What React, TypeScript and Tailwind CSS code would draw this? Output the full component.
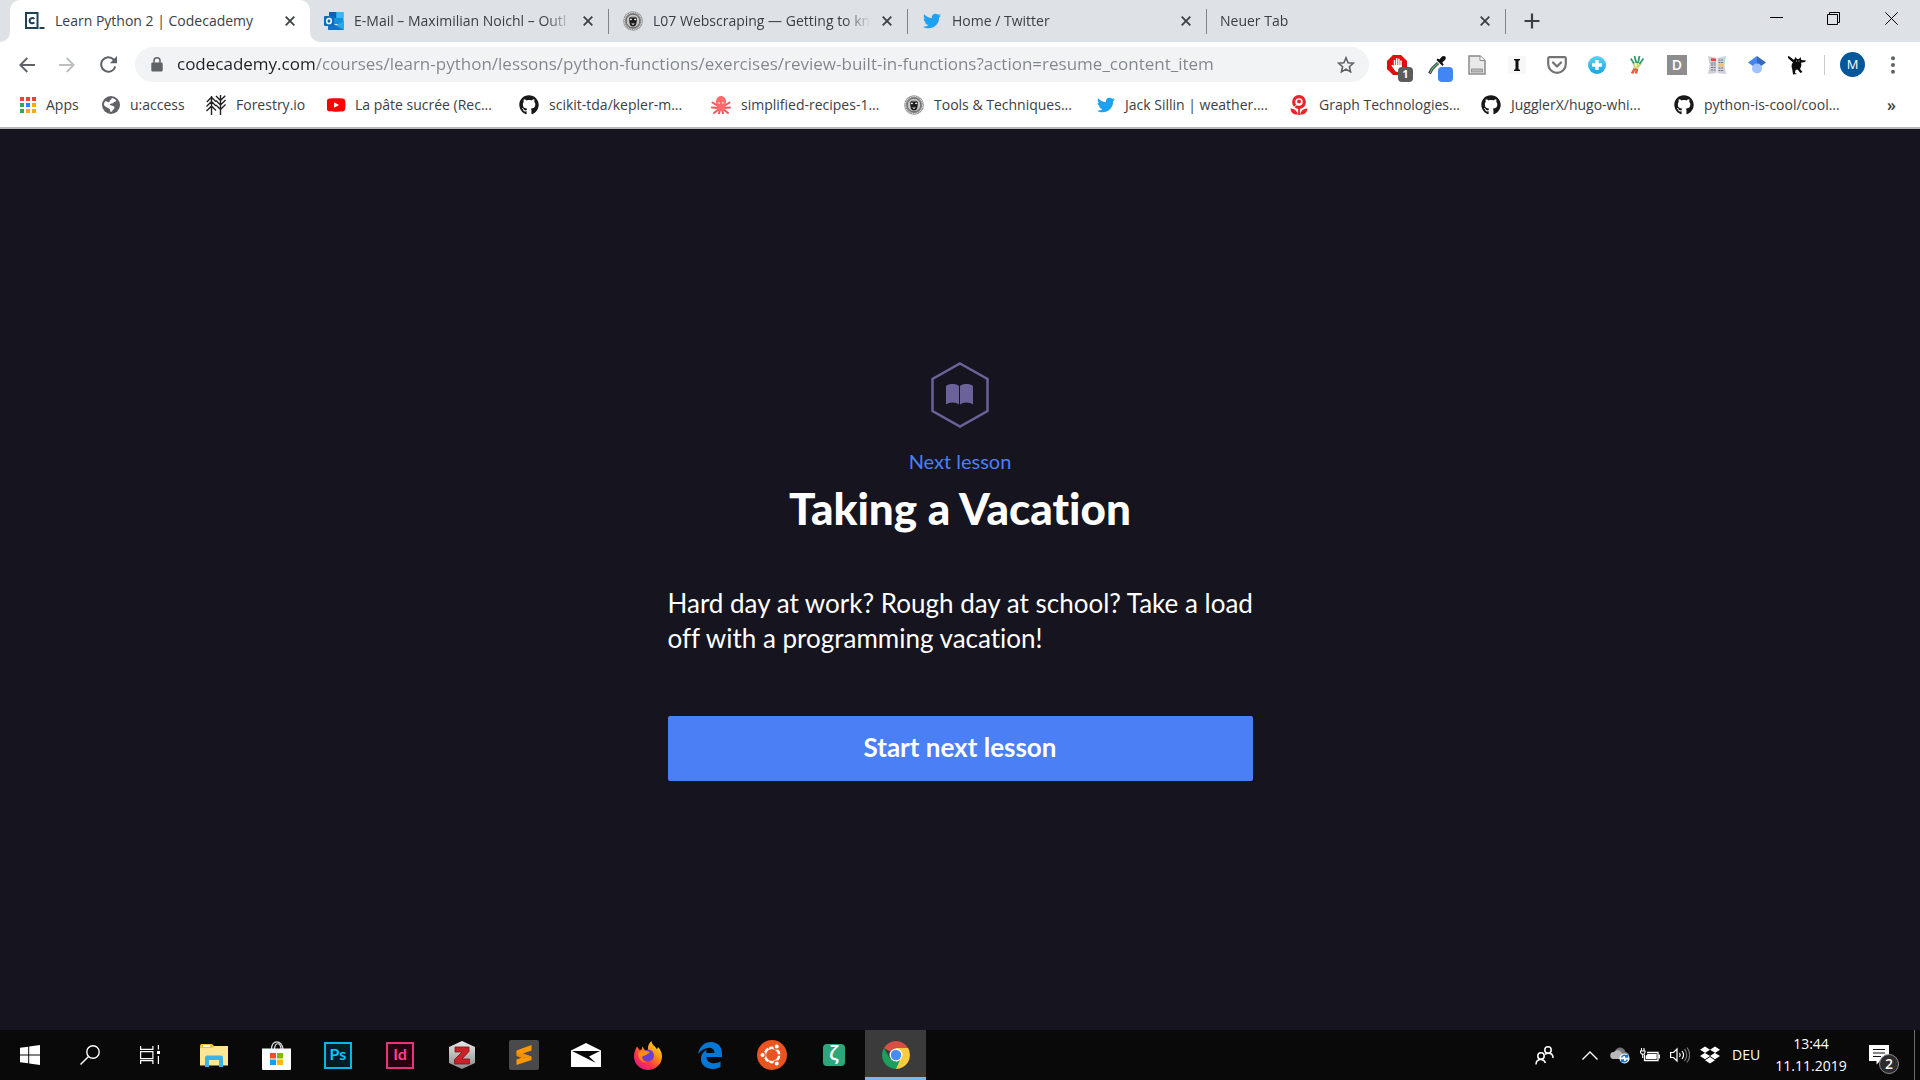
import React from "react";
import { FaGithub, FaTwitter, FaYoutube, FaDropbox } from "react-icons/fa";

type IconProps = { className?: string };

/* ---------- site icons ---------- */

const CodecademyIcon = () => (
  <svg viewBox="0 0 20 18" className="h-[18px] w-5 shrink-0">
    <rect x="1" y="1" width="11.5" height="15" fill="none" stroke="#204056" strokeWidth="2" />
    <path d="M9.200 7C8.300 5.600 4.600 5.600 4.600 8.700s3.700 3.100 4.600 1.700" fill="none" stroke="#204056" strokeWidth="2" />
    <rect x="14.500" y="15" width="5" height="2" fill="#204056" />
  </svg>
);

const OutlookIcon = () => (
  <svg viewBox="0 0 20 18" className="h-[18px] w-5 shrink-0">
    <rect x="5" y="0" width="14.500" height="12" rx="1" fill="#1490df" />
    <rect x="5" y="0" width="7" height="6" fill="#0f5fb0" />
    <rect x="12.500" y="0" width="7" height="6" fill="#35b8f1" />
    <path d="M4 9 12 13.500 20 8.500V17a1 1 0 0 1-1 1H5a1 1 0 0 1-1-1z" fill="#28a8ea" />
    <path d="M4 9 20 18H5a1 1 0 0 1-1-1z" fill="#1173c7" />
    <rect x="0" y="4" width="10" height="10" rx="1" fill="#0f6cbd" />
    <ellipse cx="5" cy="9" rx="2.300" ry="2.600" fill="none" stroke="#fff" strokeWidth="1.500" />
  </svg>
);

const BadgeFaceIcon = () => (
  <svg viewBox="0 0 20 20" className="size-5 shrink-0">
    <circle cx="10" cy="10" r="9.800" fill="#8b8b8b" />
    <circle cx="10" cy="10" r="8.600" fill="none" stroke="#dedede" strokeWidth="1.300" strokeDasharray="1 .8" />
    <circle cx="10" cy="10" r="6.800" fill="#c4c4c4" stroke="#5d5d5d" strokeWidth=".8" />
    <path d="M6 8c0-3.500 8-3.500 8 0l-.5 3.500c-.4 3-1.600 4-3.500 4s-3.100-1-3.500-4z" fill="#1c1c1c" />
    <path d="M6.500 8.200c1-1 2-.9 2.500 0-.2 1.400-2 1.500-2.500 0zM11 8.200c.7-.9 1.700-1 2.500 0-.5 1.500-2.300 1.400-2.500 0zM8 12.500h4l-2 1.500z" fill="#efefef" />
    <path d="M8.300 6h3.400" stroke="#ddd" strokeWidth=".8" />
  </svg>
);

const TwitterIcon = () => <FaTwitter className="size-[18px] shrink-0 text-[#1da1f2]" />;

const AppsIcon = () => (
  <svg viewBox="0 0 16 16" className="size-4 shrink-0">
    <g fill="#ea4335"><path d="M0 0h4v4H0zM6 0h4v4H6zM12 0h4v4h-4z" /></g>
    <path d="M0 6h4v4H0zM0 12h4v4H0z" fill="#34a853" />
    <path d="M6 6h4v4H6z" fill="#1a8cff" />
    <path d="M12 6h4v4h-4zM6 12h4v4H6zM12 12h4v4h-4z" fill="#fbab05" />
  </svg>
);

const GlobeIcon = () => (
  <svg viewBox="0 0 18 18" className="size-[18px] shrink-0">
    <circle cx="9" cy="9" r="9" fill="#5f6368" />
    <path d="M3 5.500c1.500-.6 2.300.8 4 .8 1 0 .2-1.700 1.500-2.300 1-.5 1.300-1 1-1.900 2 .2 3.600 1 4.800 2.500-.7 1.700-2.300 1.200-2.900 2.200-.5.900-2.800.7-3.400 1.300-.8.800.6 1.400 1.500 1.500 1.600.2 3 1 3 2.100 0 1.400-1.500 1.500-1.900 2.900-.3.700-1 1.500-1.900 1.500-.8-.9-.3-2.600-1.300-3.300C6 11.700 3 11.400 1.900 8.800c0-1.300.4-2.400 1.100-3.300z" fill="#fff" />
  </svg>
);

const ForestryIcon = () => (
  <svg viewBox="0 0 20 20" className="size-5 shrink-0" fill="none" stroke="#222" strokeWidth="1.400">
    <path d="M5.500 1v19M.8 7l4.700-4.700L10 6.800M.5 11.500l5-5 4.500 4.500M.5 16l5-5 4.500 4.500M14.500 0v20M10 1l4.500 4.500L19.200.8M10 5.500l4.500 4.500 5-5M10 10l4.500 4.500 5-5" />
  </svg>
);

const YoutubeIcon = () => (
  <span className="flex h-[14px] w-[18px] shrink-0 items-center justify-center">
    <FaYoutube className="size-5 shrink-0 text-[#ff0000]" />
  </span>
);

const GithubIcon = () => <FaGithub className="size-5 shrink-0 text-[#191717]" />;

const OctopusIcon = () => (
  <svg viewBox="0 0 20 18" className="h-[18px] w-5 shrink-0">
    <path d="M7 10 1.500 6.500M13 10l5.500-3.500M7 12l-6-.5M13 12l6-.5M8 13l-5 4M12 13l5 4M9 13l-1 4.500M11 13l1 4.500" stroke="#f2555a" strokeWidth="2" strokeLinecap="round" />
    <path d="M5 6c0-8 10-8 10 0l-1 7c-1 3-7 3-8 0z" fill="#ff6b6b" />
    <circle cx="8" cy="7" r="1.100" fill="#fff" /><circle cx="12" cy="7" r="1.100" fill="#fff" />
    <circle cx="8" cy="7" r=".5" fill="#222" /><circle cx="12" cy="7" r=".5" fill="#222" />
  </svg>
);

const GraphIcon = () => (
  <svg viewBox="0 0 20 20" className="size-5 shrink-0">
    <circle cx="10" cy="7" r="5.300" fill="none" stroke="#e8242b" strokeWidth="3.200" />
    <circle cx="10" cy="6.500" r="2" fill="#e8242b" />
    <path d="M9.500 8.500C8 10 6 10.500 4.500 13" fill="none" stroke="#fff" strokeWidth="1" />
    <path d="M10 13v7" stroke="#e8242b" strokeWidth="1.800" />
    <path d="M1.500 13.500c3.500 0 6.500 2 7.500 6-4.500.3-7-1.500-7.500-6zM18.500 13.500c-3.500 0-6.500 2-7.500 6 4.500.3 7-1.500 7.500-6z" fill="#e8242b" />
  </svg>
);

/* ---------- browser glyphs ---------- */

const Cross = ({ className }: IconProps) => (
  <svg viewBox="0 0 10 10" className={className} stroke="currentColor">
    <path d="M.7.7l8.600 8.600M9.300.7.7 9.300" strokeWidth="1.800" />
  </svg>
);

const Lock = () => (
  <svg viewBox="0 0 12 15" className="h-[15px] w-3 shrink-0" fill="#5f6368">
    <path d="M1.500 5.500h9A1.200 1.200 0 0 1 11.700 6.700v6.600a1.200 1.200 0 0 1-1.200 1.200h-9A1.200 1.200 0 0 1 .3 13.300V6.700a1.200 1.200 0 0 1 1.200-1.200z" />
    <path d="M3 6V3.800a3 3 0 0 1 6 0V6" fill="none" stroke="#5f6368" strokeWidth="1.500" />
  </svg>
);

const AdblockIcon = () => (
  <svg viewBox="0 0 20 20" className="size-5">
    <path d="M6 0h8l6 6v8l-6 6H6l-6-6V6z" fill="#e40d0d" />
    <path d="M7.500 5.500V11M9.700 3.800V11M11.900 4.200V11M14 6v6M5.200 10.500l3 4" stroke="#fff" strokeWidth="1.500" strokeLinecap="round" />
    <path d="M6.800 10h7.900v2.500c0 3-2 4.500-4 4.500s-2.600-1-3.900-3z" fill="#fff" />
  </svg>
);

const DropperIcon = () => (
  <svg viewBox="0 0 20 20" className="size-5">
    <path d="M11 8 5 14l-2.500 4.500" fill="none" stroke="#333" strokeWidth="3" />
    <path d="M11 8 5 14l-2 4" fill="none" stroke="#5cb577" strokeWidth="1.300" />
    <path d="m9.500 5 6 6 1.200-1.400-1.500-2 2.500-2.300c3-3-.5-5.800-3-3.500L12.500 4.500 10.700 3.500z" fill="#111" />
  </svg>
);

const PageIcon = () => (
  <svg viewBox="0 0 18 20" className="h-5 w-[18px]">
    <path d="M1 1h11l5 4.500V19H1z" fill="#e9e9e9" stroke="#8a8a8a" strokeWidth="1.500" />
    <path d="M12 1v4.500h5" fill="#fff" stroke="#8a8a8a" />
    <rect x="3.500" y="14" width="11" height="3" fill="#bbb" stroke="#888" strokeWidth=".8" />
  </svg>
);

const InstapaperIcon = () => (
  <svg viewBox="0 0 18 18" className="size-[18px]">
    <path d="M0 0h18v18H0z" fill="#f7f7f7" />
    <path d="M6 3h6v1.200l-1.500.6v8.400l1.500.6V15H6v-1.200l1.500-.6V4.800L6 4.200z" fill="#111" />
  </svg>
);

const PocketIcon = () => (
  <svg viewBox="0 0 20 18" className="h-[18px] w-5" fill="none" stroke="#737373">
    <path d="M2.500 1.200h15a1.300 1.300 0 0 1 1.300 1.300V8a8.800 8.800 0 0 1-17.600 0V2.500a1.300 1.300 0 0 1 1.300-1.300z" strokeWidth="2.200" />
    <path d="m6 6.500 4 4 4-4" strokeWidth="2.300" strokeLinecap="round" strokeLinejoin="round" />
  </svg>
);

const PlusBallIcon = () => (
  <svg viewBox="0 0 18 18" className="size-[18px]">
    <defs>
      <linearGradient id="ball" x2="0" y2="1">
        <stop offset="0" stopColor="#5fd3f5" />
        <stop offset="1" stopColor="#12a5e4" />
      </linearGradient>
    </defs>
    <circle cx="9" cy="9" r="9" fill="url(#ball)" />
    <path d="M9 4v10M4 9h10" stroke="#fff" strokeWidth="3.400" />
  </svg>
);

const CarrotsIcon = () => (
  <svg viewBox="0 0 14 20" className="h-5 w-3.5" fill="none">
    <path d="m2 18.500 3-5.500M6 18.500l1-5" stroke="#f05a3c" strokeWidth="2.600" />
    <path d="M5 13.500 3.500 8M7 13.500 7.500 7M7.500 13l3.500-5" stroke="#c9d77a" strokeWidth="2" />
    <path d="M.7 3.500 4 8.500M4.500 1l1.800 7M9.500 1 8 8M13.500 3.500 9.500 9" stroke="#2f9d6b" strokeWidth="1.800" />
  </svg>
);

const DIcon = () => (
  <span className="flex size-5 items-center justify-center bg-[#8d8d8d] text-sm font-semibold text-white">D</span>
);

const NewsIcon = () => (
  <svg viewBox="0 0 18 18" className="size-[18px]">
    <path d="M0 0l9 2 9-2-1.500 9 1.500 9-9-1-9 1 1.500-9z" fill="#cfcfd8" />
    <path d="M3 3.500l5 .5" stroke="#ee3d3d" strokeWidth="2.500" />
    <path d="M3 7h5M3 9h5M3 11.500h5M3 14h5M10.500 4h5M10.500 6.500h5M10.500 12h5M10.500 14.500h5" stroke="#77777f" strokeWidth="1.200" strokeDasharray="2 .6" />
    <path d="M10.500 9.300h5" stroke="#f2c14a" strokeWidth="2" />
    <path d="M9 2v15" stroke="#fff" />
  </svg>
);

const ScholarIcon = () => (
  <svg viewBox="0 0 18 18" className="size-[18px]">
    <path d="M0 6.500 9 0v13z" fill="#4285f4" />
    <path d="M18 6.500 9 0v13z" fill="#356ac3" />
    <circle cx="9" cy="12.500" r="5" fill="#a0c3ff" />
  </svg>
);

const CreatureIcon = () => (
  <svg viewBox="0 0 18 20" className="h-5 w-[18px]">
    <path d="M0 1l1.500.5L6 5l1.500-3 1.500 2h2L12.500 2l.8 3L18 5.500 17 7l-4 .8c.8 2.200.2 4.200-1 6.200l2.500 3-2 1-3-3.500-2 .5-.5 3L9 19l-4 .5-.6-4.500C3 11 3.500 9 5 7.500L0 3z" fill="#0c0c0c" />
    <circle cx="8.500" cy="6" r=".5" fill="#fff" /><circle cx="11" cy="6" r=".5" fill="#fff" />
  </svg>
);

/* ---------- taskbar icons ---------- */

const WindowsIcon = () => (
  <svg viewBox="0 0 20 20" className="size-5" fill="#fff">
    <path d="M0 2.800 8.200 1.700V9.500H0zM9.200 1.500 20 0v9.500H9.200zM0 10.500h8.200v7.800L0 17.200zM9.200 10.500H20V20L9.200 18.500z" />
  </svg>
);

const SearchIcon = () => (
  <svg viewBox="0 0 20 20" className="size-5" fill="none" stroke="#fff" strokeWidth="1.400">
    <circle cx="13" cy="7" r="6.200" /><path d="M8.500 11.500.5 19.500" />
  </svg>
);

const TaskViewIcon = () => (
  <svg viewBox="0 0 20 20" className="size-5" fill="none" stroke="#fff" strokeWidth="1.200">
    <path d="M.6 1v3.400h12.300V1M.6 19v-3.400h12.300V19M.6 6.600h12.300v7H.6zM18.400 0v4.500M18.400 11v8" />
    <path d="M17 6h3v3h-3z" fill="#fff" stroke="none" />
  </svg>
);

const ExplorerIcon = () => (
  <svg viewBox="0 0 28 24" className="h-6 w-7">
    <path d="M0 2.500 1 1h11l2 2h14v19H0z" fill="#fbc02d" />
    <path d="M3 2h7v2H3z" fill="#fff" />
    <path d="M0 5h12l2-2h14v19.500H0z" fill="#ffe694" />
    <path d="M5 14.500a2 2 0 0 1 2-2h14a2 2 0 0 1 2 2V24h-4v-7H9v7H5z" fill="#3bb2e8" />
  </svg>
);

const StoreIcon = () => (
  <svg viewBox="0 0 29 29" className="size-[29px]">
    <path d="M9.500 8c0-9.500 10-9.500 11.500 0M12.500 8c.5-7 6-7 6.500 0" fill="none" stroke="#ddd" strokeWidth="1.200" />
    <path d="M0 7.500h29V28a1 1 0 0 1-1 1H1a1 1 0 0 1-1-1z" fill="#fff" />
    <path d="M8 12h6v5.500H8z" fill="#f25022" /><path d="M15 12h6v5.500h-6z" fill="#7fba00" />
    <path d="M8 18.500h6V24H8z" fill="#00a4ef" /><path d="M15 18.500h6V24h-6z" fill="#ffb900" />
  </svg>
);

const PsIcon = () => (
  <span className="flex h-[27px] w-7 items-center justify-center border-2 border-[#00b7ea] bg-[#001d26] pb-0.5 font-[Lato,sans-serif] text-base font-bold text-[#00c8ff]">Ps</span>
);

const IdIcon = () => (
  <span className="flex h-[27px] w-7 items-center justify-center border-2 border-[#e8327c] bg-[#26000f] pb-0.5 font-[Lato,sans-serif] text-base font-bold text-[#ff3f93]">Id</span>
);

const ZIcon = () => (
  <svg viewBox="0 0 26 28" className="h-7 w-[26px]">
    <defs>
      <linearGradient id="hexfill" x2="0" y2="1">
        <stop offset="0" stopColor="#e8e8e8" />
        <stop offset="1" stopColor="#8a8a8a" />
      </linearGradient>
    </defs>
    <path d="M13 0 26 6v16l-13 6L0 22V6z" fill="url(#hexfill)" />
    <path d="M6 6h14v4.500L13 18h7.500v5H5.500v-4.500L13 11H6z" fill="#c92127" stroke="#7f1418" strokeWidth=".8" />
  </svg>
);

const SublimeIcon = () => (
  <svg viewBox="0 0 30 30" className="size-[30px]">
    <rect width="30" height="30" rx="2" fill="#4a4a4a" />
    <path d="M7.500 10.500 22.500 5v5.500l-8.500 3 8.500 3v3.500l-15 5v-5.500l8.500-3-8.500-3z" fill="#ff9800" />
    <path d="m7.500 12 15 4.500-7 2.500-8-3z" fill="#f08f00" />
  </svg>
);

const MailIcon = () => (
  <svg viewBox="0 0 30 24" className="h-6 w-[30px]">
    <path d="M0 7.500 15 0l15 7.500V24H0z" fill="#fff" />
    <path d="M1 8h28L18 13.500l7 6.500L1 8z" fill="#090909" />
  </svg>
);

const FirefoxIcon = () => (
  <svg viewBox="0 0 28 29" className="h-[29px] w-7">
    <defs>
      <linearGradient id="fox" x1="1" y1="0" x2=".2" y2="1">
        <stop offset="0" stopColor="#fff44f" />
        <stop offset=".4" stopColor="#ff980e" />
        <stop offset=".7" stopColor="#ff3647" />
        <stop offset="1" stopColor="#e31587" />
      </linearGradient>
    </defs>
    <path d="M3 5.500 5.500 9l2-.5 1-3 2.500 4 3-.5C13.500 5 15 2 17.500 0c0 4 4 5 5.500 8.500l1-2.500c2 2 4 5.500 4 9.500a14 13.500 0 0 1-28 0C0 11.500 1.500 8 3 5.500z" fill="url(#fox)" />
    <circle cx="14" cy="14.500" r="6" fill="#6a3fd0" />
    <path d="M4 12c3-3 6-3 9-2l3 1.500-4 2.500c-2 1-3.500.5-4 2.500 0 3 3 5 6 4.500-6 2-10-3-10-9z" fill="#ff8a16" />
  </svg>
);

const EdgeIcon = () => (
  <svg viewBox="0 0 24 27" className="h-[27px] w-6">
    <path d="M0 12C1.500 4.500 6.500 0 13 0c7 0 11 5 11 11.500V15H8.500c.2 7 9 7.500 14 4.500V25C14 29.500 3 26 3 17c0-5 2.500-7.500 6-9-1 1.500-.8 2.500-.8 3h8.300c0-7-10-7.500-16.500 1z" fill="#0078d7" />
  </svg>
);

const UbuntuIcon = () => (
  <svg viewBox="0 0 30 30" className="size-[30px]">
    <circle cx="15" cy="15" r="15" fill="#e95420" />
    <circle cx="15" cy="15" r="7.200" fill="none" stroke="#fff" strokeWidth="2.600" />
    <g stroke="#e95420" strokeWidth="1.300" fill="#fff">
      <circle cx="5.500" cy="15" r="2.700" /><circle cx="19.700" cy="6.500" r="2.700" /><circle cx="19.700" cy="23.500" r="2.700" />
    </g>
    <path d="M20 15h5M12 8.500 10.500 6M12 21.500 10.500 24" stroke="#e95420" strokeWidth="1.300" />
  </svg>
);

const ZetaIcon = () => (
  <span className="flex size-[22px] items-center justify-center rounded-sm bg-[#2ea67c] pb-1 text-xl font-semibold text-white">ζ</span>
);

const ChromeIcon = () => (
  <svg viewBox="0 0 28 28" className="size-7">
    <path d="M14 14 1.900 7a14 14 0 0 1 24.200 0z" fill="#d94f43" />
    <path d="M14 14V7h12.100A14 14 0 0 1 14 28z" fill="#fccb41" />
    <path d="M1.900 7 8 17.500l6 3.500 4-2-4 9A14 14 0 0 1 1.900 7z" fill="#1a9f5c" />
    <circle cx="14" cy="14" r="6.500" fill="#fff" /><circle cx="14" cy="14" r="5.200" fill="#4a8af4" />
  </svg>
);

const PeopleIcon = () => (
  <svg viewBox="0 0 19 19" className="size-[19px]" fill="none" stroke="#fff" strokeWidth="1.500">
    <circle cx="13" cy="4" r="3.200" /><circle cx="6" cy="10" r="3.200" />
    <path d="M1 18.500c0-3.500 2-5 5-5 2 0 3.500 1 4.500 3.500M10 8.500c1-.9 2-1.200 3.500-1.200 2.500 0 4.500 1.700 4.500 4.700" />
  </svg>
);

const ChevronUp = () => (
  <svg viewBox="0 0 16 9" className="h-[9px] w-4" fill="none" stroke="#fff" strokeWidth="1.400"><path d="m.5 8.500 7.500-7.500 7.500 7.500" /></svg>
);

const CloudIcon = () => (
  <svg viewBox="0 0 20 17" className="h-[17px] w-5">
    <path d="M5 5c1-6 9-6 10.500 0 3 .4 4.500 3 3 6H4z" fill="#777" />
    <path d="M3.500 12a3.500 3.500 0 0 1 .5-7c2-3 7-2 8 1.500L16 12z" fill="#b9b9b9" />
    <circle cx="14.500" cy="11.500" r="5" fill="#fff" />
    <path d="M11.500 10.500a3.300 3.300 0 0 1 5.700-1M17.500 12.500a3.300 3.300 0 0 1-5.700 1M17.500 7.500v2.500H15M11.500 15.500V13H14" fill="none" stroke="#1c72c4" strokeWidth="1.500" />
  </svg>
);

const BatteryIcon = () => (
  <svg viewBox="0 0 20 14" className="h-3.5 w-5">
    <path d="M4.500 6.500V12.500h13.500v-8H7" fill="none" stroke="#fff" strokeWidth="1.300" />
    <path d="M7.500 6h9.200v5H5.800V8z" fill="#fff" /><path d="M18.500 6.500H20v4h-1.500z" fill="#fff" />
    <path d="M1.500 0v2.500M4 0v2.500M.5 3h4.500v1.500l-1 1.500h-2.500l-1-1.500zM2.700 6v4" fill="none" stroke="#fff" strokeWidth="1.100" />
  </svg>
);

const VolumeIcon = () => (
  <svg viewBox="0 0 20 16" className="h-4 w-5" fill="none" stroke="#fff" strokeWidth="1.200">
    <path d="M.6 5.500h2.900L7 2v12L3.500 10.500H.6z" /><path d="M9.500 6c1 1.300 1 2.700 0 4M12 4c2 2.500 2 5.500 0 8" />
    <path d="M14.500 2c3 3.500 3 8.500 0 12M17 .5c3.500 4.500 3.500 10.500 0 15" stroke="#777" />
  </svg>
);

const NotificationIcon = () => (
  <svg viewBox="0 0 20 20" className="size-5">
    <path d="M0 0h20v16H11l-3.500 3.500V16H0z" fill="#fff" />
    <path d="M4 4.500h12M4 8h12M4 11.500h8" stroke="#111" strokeWidth="1.200" />
  </svg>
);

/* ---------- data ---------- */

type Tab = { title: string; icon?: React.ReactNode };
const tabs: Tab[] = [
  { title: "E-Mail – Maximilian Noichl – Outl", icon: <OutlookIcon /> },
  { title: "L07 Webscraping — Getting to kn", icon: <BadgeFaceIcon /> },
  { title: "Home / Twitter", icon: <TwitterIcon /> },
  { title: "Neuer Tab" },
];

type Bookmark = { label: string; icon: React.ReactNode; width: string };
const bookmarks: Bookmark[] = [
  { label: "Apps", icon: <AppsIcon />, width: "w-[82px]" },
  { label: "u:access", icon: <GlobeIcon />, width: "w-[104px]" },
  { label: "Forestry.io", icon: <ForestryIcon />, width: "w-[121px]" },
  { label: "La pâte sucrée (Rec...", icon: <YoutubeIcon />, width: "w-[192px]" },
  { label: "scikit-tda/kepler-m...", icon: <GithubIcon />, width: "w-[192px]" },
  { label: "simplified-recipes-1...", icon: <OctopusIcon />, width: "w-[193px]" },
  { label: "Tools & Techniques...", icon: <BadgeFaceIcon />, width: "w-[193px]" },
  { label: "Jack Sillin | weather....", icon: <TwitterIcon />, width: "w-[192px]" },
  { label: "Graph Technologies...", icon: <GraphIcon />, width: "w-[192px]" },
  { label: "JugglerX/hugo-whi...", icon: <GithubIcon />, width: "w-[193px]" },
  { label: "python-is-cool/cool...", icon: <GithubIcon />, width: "w-[193px]" },
];

const extensions: { name: string; icon: React.ReactNode }[] = [
  { name: "Reader page", icon: <PageIcon /> },
  { name: "Instapaper", icon: <InstapaperIcon /> },
  { name: "Pocket", icon: <PocketIcon /> },
  { name: "Add", icon: <PlusBallIcon /> },
  { name: "Carrots", icon: <CarrotsIcon /> },
  { name: "Dictionary", icon: <DIcon /> },
  { name: "News", icon: <NewsIcon /> },
  { name: "Scholar", icon: <ScholarIcon /> },
  { name: "Creature", icon: <CreatureIcon /> },
];

const systemButtons = [
  { name: "Start", icon: <WindowsIcon /> },
  { name: "Search", icon: <SearchIcon /> },
  { name: "Task view", icon: <TaskViewIcon /> },
];

const apps = [
  { name: "File Explorer", icon: <ExplorerIcon /> },
  { name: "Store", icon: <StoreIcon /> },
  { name: "Photoshop", icon: <PsIcon /> },
  { name: "InDesign", icon: <IdIcon /> },
  { name: "Z", icon: <ZIcon /> },
  { name: "Sublime Text", icon: <SublimeIcon /> },
  { name: "Mail", icon: <MailIcon /> },
  { name: "Firefox", icon: <FirefoxIcon /> },
  { name: "Edge", icon: <EdgeIcon /> },
  { name: "Ubuntu", icon: <UbuntuIcon /> },
  { name: "Zettlr", icon: <ZetaIcon /> },
];

/* ---------- sections ---------- */

function TabStrip() {
  return (
    <div className="flex h-[42px] items-stretch bg-[#dee1e6] pl-2.5">
      <div className="relative flex w-[300px] min-w-0 items-center rounded-t-[10px] bg-white px-[15px]">
        <svg viewBox="0 0 10 10" className="absolute bottom-0 -left-2.5 size-2.5" fill="#fff"><path d="M10 0v10H0A10 10 0 0 0 10 0z" /></svg>
        <svg viewBox="0 0 10 10" className="absolute -right-2.5 bottom-0 size-2.5" fill="#fff"><path d="M0 0v10h10A10 10 0 0 1 0 0z" /></svg>
        <CodecademyIcon />
        <span className="ml-2.5 min-w-0 flex-1 overflow-hidden whitespace-nowrap">Learn Python 2 | Codecademy</span>
        <button aria-label="Close tab" className="ml-3"><Cross className="size-2.5" /></button>
      </div>
      {tabs.map((tab) => (
        <div key={tab.title} className="flex w-[299px] min-w-0 items-center pl-[13px]">
          {tab.icon && <span className="mr-2.5 flex w-[21px] shrink-0 justify-center">{tab.icon}</span>}
          <span className="min-w-0 flex-1 overflow-hidden mask-r-from-88% whitespace-nowrap">{tab.title}</span>
          <button aria-label="Close tab" className="mr-[15px] ml-[11px]"><Cross className="size-2.5" /></button>
          <span className="h-[25px] w-px bg-[#808387]" />
        </div>
      ))}
      <button aria-label="New tab" className="ml-[18px]">
        <svg viewBox="0 0 16 16" className="size-4" stroke="#3c4043" strokeWidth="2.200"><path d="M8 .5v15M.5 8h15" /></svg>
      </button>
      <div className="ml-auto flex h-9">
        <button aria-label="Minimize" className="flex w-[57px] items-center justify-center">
          <svg viewBox="0 0 13 13" className="size-[13px]" stroke="#000"><path d="M0 5.500h13" /></svg>
        </button>
        <button aria-label="Restore" className="flex w-[57px] items-center justify-center">
          <svg viewBox="0 0 13 13" className="size-[13px]" fill="none" stroke="#000"><path d="M.5 2.500h10v10H.5zM2.500 2.500v-2h10v10h-2" /></svg>
        </button>
        <button aria-label="Close" className="flex w-[58px] items-center justify-center">
          <svg viewBox="0 0 13 13" className="size-[13px]" stroke="#000"><path d="m.3.3 12.400 12.400M12.700.3.300 12.700" /></svg>
        </button>
      </div>
    </div>
  );
}

function Toolbar() {
  return (
    <div className="flex h-[45px] items-center pr-[17px]">
      <div className="flex w-[135px] shrink-0 items-center pl-[7px] text-[#5f6368]">
        <button aria-label="Back" className="flex w-10 justify-center">
          <svg viewBox="0 0 16 16" className="size-4" fill="none" stroke="currentColor" strokeWidth="1.900"><path d="M16 8H1.500M8.300 1 1.300 8l7 7" /></svg>
        </button>
        <button aria-label="Forward" className="flex w-10 justify-center text-[#bdc0c3]">
          <svg viewBox="0 0 16 16" className="size-4" fill="none" stroke="currentColor" strokeWidth="1.900"><path d="M0 8h14.500M7.700 1l7 7-7 7" /></svg>
        </button>
        <button aria-label="Reload" className="flex w-[42px] justify-center">
          <svg viewBox="0 0 17 17" className="size-[17px]" fill="none" stroke="currentColor" strokeWidth="2"><path d="M15.300 10.500A7.200 7.200 0 1 1 13.600 3.500L15.500 5.500" /><path d="M17 0v7.200H9.800z" fill="currentColor" stroke="none" /></svg>
        </button>
      </div>
      <div className="flex h-[35px] min-w-0 flex-1 items-center rounded-full bg-[#f1f3f4] pr-3.5 pl-4">
        <Lock />
        <input
          aria-label="Address"
          defaultValue="codecademy.com/courses/learn-python/lessons/python-functions/exercises/review-built-in-functions?action=resume_content_item"
          className="ml-3.5 min-w-0 flex-1 bg-[linear-gradient(90deg,#202124_138px,#80868b_138px)] bg-clip-text text-[17px] text-transparent outline-none"
        />
        <button aria-label="Bookmark this page">
          <svg viewBox="0 0 18 17" className="h-[17px] w-[18px]" fill="none" stroke="#5f6368" strokeWidth="1.600"><path d="m9 1.800 2.100 4.900 5.300.5-4 3.500 1.200 5.200L9 13.100l-4.600 2.800 1.200-5.200-4-3.500 5.300-.5z" /></svg>
        </button>
      </div>
      <div className="ml-2 flex items-center">
        <button aria-label="Ad blocker" className="relative flex w-10 justify-center">
          <AdblockIcon />
          <span className="absolute right-1 -bottom-[7px] flex size-[15px] items-center justify-center rounded-sm bg-[#5c5c5c] text-[11px] font-bold text-white">1</span>
        </button>
        <button aria-label="Colour picker" className="relative flex w-10 justify-center">
          <DropperIcon />
          <span className="absolute right-1 -bottom-[7px] size-[15px] rounded-sm bg-[#4285f4]" />
        </button>
        {extensions.map((e) => (
          <button key={e.name} aria-label={e.name} className="flex w-10 justify-center">{e.icon}</button>
        ))}
      </div>
      <span className="ml-[7px] h-5 w-px bg-[#c8cacd]" />
      <button aria-label="Profile" className="ml-[15px] flex size-[25px] items-center justify-center rounded-full bg-[#01579b] text-[13px] text-white">M</button>
      <button aria-label="Menu" className="ml-[18px] flex w-5 justify-center">
        <svg viewBox="0 0 4 18" className="h-[18px] w-1" fill="#5f6368"><circle cx="2" cy="2.200" r="2" /><circle cx="2" cy="9" r="2" /><circle cx="2" cy="15.800" r="2" /></svg>
      </button>
    </div>
  );
}

function BookmarksBar() {
  return (
    <div className="flex h-10 items-center pb-1 pl-5">
      {bookmarks.map((b) => (
        <a key={b.label} href="#" className={`flex shrink-0 items-center gap-2.5 overflow-hidden whitespace-nowrap ${b.width}`}>
          {b.icon}
          <span>{b.label}</span>
        </a>
      ))}
      <button aria-label="More bookmarks" className="mr-6 ml-auto text-base font-semibold">»</button>
    </div>
  );
}

function Lesson() {
  return (
    <main className="flex flex-1 flex-col items-center justify-center bg-[#15141f] pb-[17px] font-[Lato,sans-serif] text-white [font-variant-ligatures:no-common-ligatures]">
      <div className="flex w-[585px] max-w-full flex-col items-center">
        <svg viewBox="0 0 58 66" className="h-[66px] w-[58px]" fill="none">
          <path d="M29 1.500 56.500 17v32L29 64.500 1.500 49V17z" stroke="#6a6299" strokeWidth="2.500" />
          <path d="M15 24c3-2.600 10-2.600 13 0v18.500c-3-2.800-10-2.800-13 0zM29 24c3-2.600 10-2.600 13 0v18.500c-3-2.800-10-2.800-13 0z" fill="#6a6299" />
        </svg>
        <p className="mt-[19px] text-xl leading-7 text-[#4b7ff5]">Next lesson</p>
        <h1 className="mt-[9px] text-[44px] leading-12 font-black">Taking a Vacation</h1>
        <p className="mt-[54px] w-full text-[26px] leading-[35px] whitespace-nowrap">
          Hard day at work? Rough day at school? Take a load
          <br />
          off with a programming vacation!
        </p>
        <button className="mt-[60px] h-[65px] w-full rounded-xs bg-[#4b7ff5] text-[26px] font-bold">Start next lesson</button>
      </div>
    </main>
  );
}

function Taskbar() {
  return (
    <footer className="flex h-[50px] shrink-0 items-stretch bg-[#090909] text-white">
      {systemButtons.map((b) => (
        <button key={b.name} aria-label={b.name} className="flex w-[60px] items-center justify-center">{b.icon}</button>
      ))}
      <div className="ml-[3px] flex">
        {apps.map((a) => (
          <button key={a.name} aria-label={a.name} className="flex w-[62px] items-center justify-center">{a.icon}</button>
        ))}
        <button aria-label="Chrome" className="flex w-[61px] items-center justify-center border-b-3 border-[#76b9ed] bg-[#3b3b3b] pt-[3px]"><ChromeIcon /></button>
      </div>
      <div className="ml-auto flex items-center">
        <button aria-label="People" className="mr-7"><PeopleIcon /></button>
        <button aria-label="Show hidden icons" className="mr-3"><ChevronUp /></button>
        <div className="flex items-center gap-2.5">
          <CloudIcon />
          <BatteryIcon />
          <VolumeIcon />
          <FaDropbox className="size-5" />
        </div>
        <span className="ml-3 w-[30px]">DEU</span>
        <button className="ml-3 flex w-[74px] flex-col items-center leading-[22px]">
          <span>13:44</span>
          <span>11.11.2019</span>
        </button>
        <button aria-label="Notifications" className="relative ml-[21px] flex h-10 w-[30px] items-start pt-2.5">
          <NotificationIcon />
          <span className="absolute top-[19px] left-2.5 flex size-5 items-center justify-center rounded-full border border-[#8a8a8a] bg-[#2c2c2c] text-sm font-semibold">2</span>
        </button>
        <span className="mr-[5px] ml-[15px] h-[50px] w-px bg-[#6d6d6d]" />
      </div>
    </footer>
  );
}

export default function App() {
  return (
    <div className="flex min-h-screen flex-col bg-white font-['Open_Sans',sans-serif] text-sm text-[#3c4043]">
      <header className="border-b-2 border-[#b5b7bb]">
        <TabStrip />
        <Toolbar />
        <BookmarksBar />
      </header>
      <Lesson />
      <Taskbar />
    </div>
  );
}
